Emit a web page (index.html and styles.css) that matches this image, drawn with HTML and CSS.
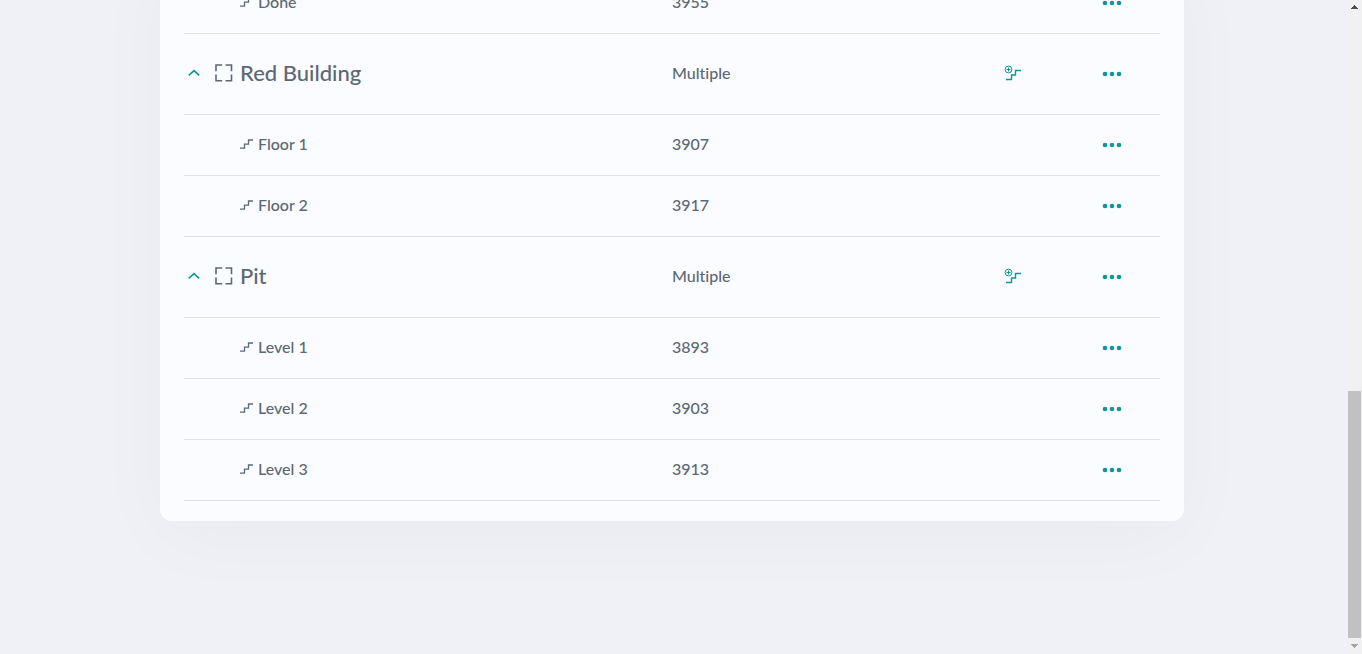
FILE: index.html
```html
<!DOCTYPE html>
<html lang="en">
<head>
    <meta charset="UTF-8">
    <meta name="viewport" content="width=device-width, initial-scale=1.0">
    <title>Buildings</title>
    <link rel="stylesheet" href="styles.css">
</head>
<body>
    <!-- Shared icons -->
    <svg class="sprite" aria-hidden="true">
        <symbol id="i-stairs" viewBox="0 0 13 10">
            <path d="M0 9.2H4.5V5.2H8.5V1H13" />
        </symbol>
        <symbol id="i-area" viewBox="0 0 18 18">
            <path d="M7.2 1H1V7.2M10.5 1H16.5V7.2M16.5 10.5V16.7H10.5M7.2 16.7H1V10.5" />
        </symbol>
        <symbol id="i-up" viewBox="0 0 12 8">
            <path d="M0.8 6.4L6 1.6L11.2 6.4" />
        </symbol>
        <symbol id="i-add" viewBox="0 0 18 16">
            <circle cx="4.5" cy="4.5" r="3.4" stroke-width="1" />
            <path d="M2.5 4.5H6.5M4.5 2.5V6.5" stroke-width="1" />
            <path d="M2 14.5H7.5V10H11.5V5.5H17" />
        </symbol>
        <symbol id="i-dots" viewBox="0 0 20 6">
            <circle cx="3" cy="3" r="2.3" />
            <circle cx="10" cy="3" r="2.3" />
            <circle cx="17" cy="3" r="2.3" />
        </symbol>
    </svg>

    <main class="page">
        <section class="card">
            <table class="locations">
                <colgroup>
                    <col class="col-name">
                    <col class="col-code">
                    <col class="col-add">
                    <col class="col-more">
                </colgroup>
                <tbody>
                    <tr class="level">
                        <td><div class="name"><svg class="stairs"><use href="#i-stairs" /></svg>Done</div></td>
                        <td>3955</td>
                        <td></td>
                        <td class="action"><button type="button" aria-label="More"><svg class="dots"><use href="#i-dots" /></svg></button></td>
                    </tr>
                </tbody>
                <tbody>
                    <tr class="building">
                        <td>
                            <div class="name">
                                <button type="button" class="toggle" aria-label="Collapse"><svg class="up"><use href="#i-up" /></svg></button>
                                <svg class="area"><use href="#i-area" /></svg>
                                <span class="title">Red Building</span>
                            </div>
                        </td>
                        <td>Multiple</td>
                        <td><button type="button" aria-label="Add level"><svg class="add"><use href="#i-add" /></svg></button></td>
                        <td class="action"><button type="button" aria-label="More"><svg class="dots"><use href="#i-dots" /></svg></button></td>
                    </tr>
                    <tr class="level">
                        <td><div class="name"><svg class="stairs"><use href="#i-stairs" /></svg>Floor 1</div></td>
                        <td>3907</td>
                        <td></td>
                        <td class="action"><button type="button" aria-label="More"><svg class="dots"><use href="#i-dots" /></svg></button></td>
                    </tr>
                    <tr class="level">
                        <td><div class="name"><svg class="stairs"><use href="#i-stairs" /></svg>Floor 2</div></td>
                        <td>3917</td>
                        <td></td>
                        <td class="action"><button type="button" aria-label="More"><svg class="dots"><use href="#i-dots" /></svg></button></td>
                    </tr>
                </tbody>
                <tbody>
                    <tr class="building">
                        <td>
                            <div class="name">
                                <button type="button" class="toggle" aria-label="Collapse"><svg class="up"><use href="#i-up" /></svg></button>
                                <svg class="area"><use href="#i-area" /></svg>
                                <span class="title">Pit</span>
                            </div>
                        </td>
                        <td>Multiple</td>
                        <td><button type="button" aria-label="Add level"><svg class="add"><use href="#i-add" /></svg></button></td>
                        <td class="action"><button type="button" aria-label="More"><svg class="dots"><use href="#i-dots" /></svg></button></td>
                    </tr>
                    <tr class="level">
                        <td><div class="name"><svg class="stairs"><use href="#i-stairs" /></svg>Level 1</div></td>
                        <td>3893</td>
                        <td></td>
                        <td class="action"><button type="button" aria-label="More"><svg class="dots"><use href="#i-dots" /></svg></button></td>
                    </tr>
                    <tr class="level">
                        <td><div class="name"><svg class="stairs"><use href="#i-stairs" /></svg>Level 2</div></td>
                        <td>3903</td>
                        <td></td>
                        <td class="action"><button type="button" aria-label="More"><svg class="dots"><use href="#i-dots" /></svg></button></td>
                    </tr>
                    <tr class="level">
                        <td><div class="name"><svg class="stairs"><use href="#i-stairs" /></svg>Level 3</div></td>
                        <td>3913</td>
                        <td></td>
                        <td class="action"><button type="button" aria-label="More"><svg class="dots"><use href="#i-dots" /></svg></button></td>
                    </tr>
                </tbody>
            </table>
        </section>
    </main>

    <div class="scrollbar" aria-hidden="true">
        <svg class="arrow" viewBox="0 0 7 4"><path d="M3 0H4V1H5V2H6V3H7V4H0V3H1V2H2V1H3Z" fill="#505050" /></svg>
        <div class="track"><div class="thumb"></div></div>
        <svg class="arrow" viewBox="0 0 7 4"><path d="M0 0H7V1H6V2H5V3H4V4H3V3H2V2H1V1H0Z" fill="#a3a3a3" /></svg>
    </div>
</body>
</html>
```

FILE: styles.css
```css
* {
    box-sizing: border-box;
}

body {
    margin: 0;
    display: flex;
    height: 100vh;
    overflow: hidden;
    background-color: #f0f1f6;
    color: #5b6875;
    font-family: Lato, "Open Sans", sans-serif;
    font-size: 16px;
    font-weight: 500;
    font-variant-ligatures: none;
    line-height: 24px;
}

svg {
    display: block;
    flex: none;
    fill: none;
    stroke: currentColor;
}

.sprite {
    position: absolute;
    width: 0;
    height: 0;
}

/* Scrolled to the end of the list */
.page {
    flex: 1;
    display: flex;
    flex-direction: column;
    justify-content: flex-end;
    align-items: center;
    padding: 0 3px 133px 0;
    overflow: hidden;
}

.card {
    width: 100%;
    max-width: 1024px;
    padding: 20px 24px;
    background-color: #fbfcff;
    border-radius: 12px;
    box-shadow: 0 16px 80px rgba(40, 40, 40, 0.03);
}

.locations {
    width: 100%;
    table-layout: fixed;
    border-collapse: separate;
    border-spacing: 0;
}

.col-name {
    width: 50%;
}

.col-add {
    width: 102px;
}

.col-more {
    width: 96px;
}

td {
    height: 61px;
    padding: 0 0 2px;
    border-bottom: 1px solid #dfe2e9;
    vertical-align: middle;
}

.building td {
    height: 81px;
}

td.action,
.building td.action {
    padding-bottom: 0;
}

.name {
    display: flex;
    align-items: center;
}

.level .name {
    gap: 5px;
    padding-left: 56px;
}

.title {
    margin-left: 7px;
    font-size: 22px;
}

button {
    display: block;
    margin: 0 auto;
    padding: 4px;
    border: none;
    background: none;
    color: #0f9794;
    cursor: pointer;
}

.toggle {
    margin: 0 11px 0 0;
}

.stairs {
    width: 13px;
    height: 10px;
    stroke-width: 1.3;
}

.area {
    width: 18px;
    height: 18px;
    stroke-width: 1.6;
}

.up {
    width: 12px;
    height: 8px;
    stroke-width: 1.7;
}

.add {
    width: 18px;
    height: 16px;
    stroke-width: 1.4;
}

.dots {
    width: 20px;
    height: 6px;
    fill: currentColor;
    stroke: none;
}

.scrollbar {
    display: flex;
    flex-direction: column;
    align-items: center;
    width: 15px;
    padding: 5px 0 6px;
    background-color: #f1f1f1;
}

.arrow {
    width: 7px;
    height: 4px;
    stroke: none;
}

.track {
    flex: 1;
    display: flex;
    flex-direction: column;
    justify-content: flex-end;
    padding: 6px 0;
}

.thumb {
    width: 13px;
    height: 247px;
    background-color: #c1c1c1;
}
```
